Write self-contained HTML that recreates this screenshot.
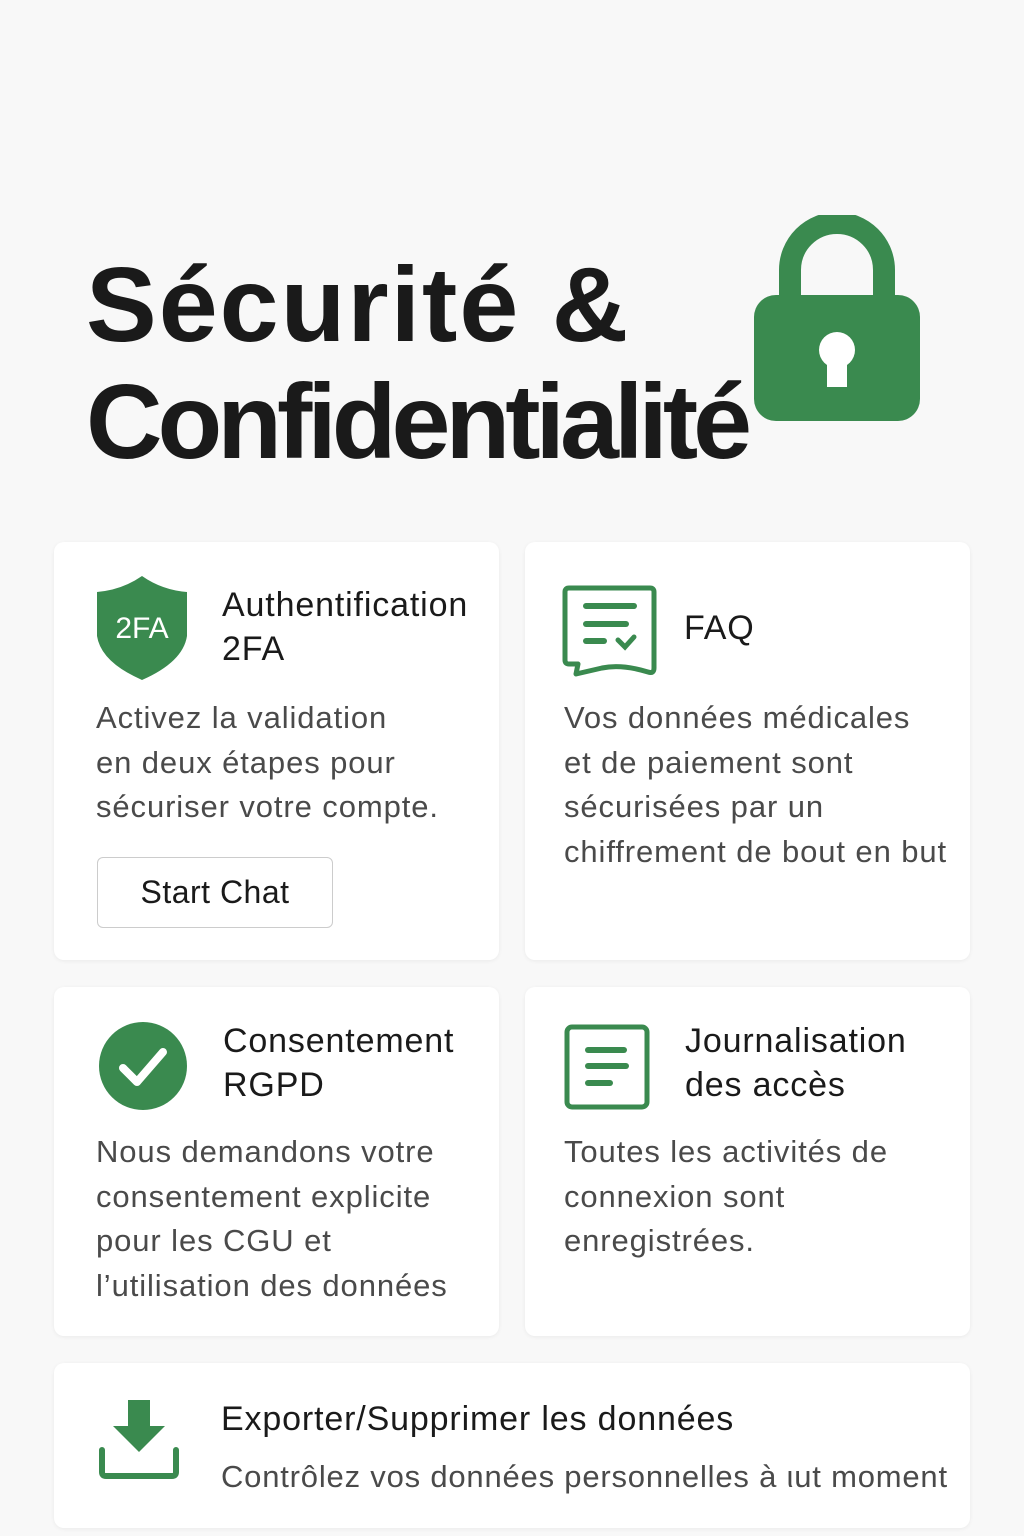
<!DOCTYPE html>
<html><head><meta charset="utf-8"><style>
body{margin:0;width:1024px;height:1536px;background:#f8f8f8;font-family:"Liberation Sans",sans-serif;position:relative;overflow:hidden}
.t{position:absolute;left:86px;font-weight:bold;font-size:106px;color:#1a1a1a;white-space:nowrap}
.c{position:absolute;background:#fff;border-radius:10px;box-shadow:0 1px 4px rgba(0,0,0,.06)}
.h{position:absolute;font-size:34px;line-height:44px;color:#1a1a1a;letter-spacing:0.85px;white-space:nowrap}
.p{position:absolute;font-size:31px;line-height:44.5px;color:#4a4a4a;white-space:nowrap;letter-spacing:0.9px}
svg{position:absolute}
</style></head><body>
<div class="t" style="top:245px;letter-spacing:2px">Sécurité &amp;</div>
<div class="t" style="top:362px;letter-spacing:-5px">Confidentialité</div>
<svg style="left:752px;top:215px" width="170" height="210" viewBox="0 0 170 210">
<path d="M38 85 V55 a47 47 0 0 1 94 0 V85" fill="none" stroke="#3a8a4f" stroke-width="22"/>
<rect x="2" y="80" width="166" height="126" rx="22" fill="#3a8a4f"/>
<circle cx="85" cy="135" r="18" fill="#fff"/><rect x="75" y="140" width="20" height="32" fill="#fff"/>
</svg>

<div class="c" style="left:54px;top:542px;width:445px;height:418px"></div>
<svg style="left:97px;top:576px" width="90" height="104" viewBox="0 0 90 104"><path d="M45 0 Q25 14 0 16 V60 Q4 86 45 104 Q86 86 90 60 V16 Q65 14 45 0Z" fill="#3a8a4f"/><text x="45" y="62" font-size="30" fill="#fff" text-anchor="middle" font-family="Liberation Sans">2FA</text></svg>
<div class="h" style="left:222px;top:583px">Authentification<br>2FA</div>
<div class="p" style="left:96px;top:696px">Activez la validation<br>en deux étapes pour<br>sécuriser votre compte.</div>
<div style="position:absolute;left:97px;top:857px;width:234px;height:69px;border:1px solid #ccc;border-radius:6px;background:#fff;font-size:32px;line-height:69px;text-align:center;color:#1a1a1a;letter-spacing:0.5px">Start Chat</div>

<div class="c" style="left:525px;top:542px;width:445px;height:418px"></div>
<svg style="left:562px;top:584px" width="95" height="95" viewBox="0 0 95 95"><path d="M7 4 H88 Q92 4 92 8 V84 Q92 90 86 88 Q60 80 40 84 L14 90 L16 80 H7 Q3 80 3 76 V8 Q3 4 7 4Z" fill="none" stroke="#3a8a4f" stroke-width="5" stroke-linejoin="round"/><g stroke="#3a8a4f" stroke-width="6" stroke-linecap="round"><line x1="24" y1="22" x2="72" y2="22"/><line x1="24" y1="40" x2="64" y2="40"/><line x1="24" y1="57" x2="42" y2="57"/></g><path d="M56 56 L63 63 L72 53" fill="none" stroke="#3a8a4f" stroke-width="5" stroke-linecap="round"/></svg>
<div class="h" style="left:684px;top:606px">FAQ</div>
<div class="p" style="left:564px;top:696px">Vos données médicales<br>et de paiement sont<br>sécurisées par un<br>chiffrement de bout en but</div>

<div class="c" style="left:54px;top:987px;width:445px;height:349px"></div>
<svg style="left:99px;top:1022px" width="88" height="88" viewBox="0 0 88 88"><circle cx="44" cy="44" r="44" fill="#3a8a4f"/><path d="M24 46 L38 60 L64 30" fill="none" stroke="#fff" stroke-width="8" stroke-linecap="round" stroke-linejoin="round"/></svg>
<div class="h" style="left:223px;top:1019px">Consentement<br>RGPD</div>
<div class="p" style="left:96px;top:1130px">Nous demandons votre<br>consentement explicite<br>pour les CGU et<br>l’utilisation des données</div>

<div class="c" style="left:525px;top:987px;width:445px;height:349px"></div>
<svg style="left:564px;top:1024px" width="86" height="86" viewBox="0 0 86 86"><rect x="3" y="3" width="80" height="80" rx="5" fill="none" stroke="#3a8a4f" stroke-width="5"/><g stroke="#3a8a4f" stroke-width="6" stroke-linecap="round"><line x1="24" y1="26" x2="60" y2="26"/><line x1="24" y1="42" x2="62" y2="42"/><line x1="24" y1="59" x2="46" y2="59"/></g></svg>
<div class="h" style="left:685px;top:1019px">Journalisation<br>des accès</div>
<div class="p" style="left:564px;top:1130px">Toutes les activités de<br>connexion sont<br>enregistrées.</div>

<div class="c" style="left:54px;top:1363px;width:916px;height:165px"></div>
<svg style="left:97px;top:1398px" width="84" height="82" viewBox="0 0 84 82"><path d="M31 2 H53 V28 H68 L42 54 L16 28 H31Z" fill="#3a8a4f"/><path d="M5 52 V74 Q5 78 9 78 H75 Q79 78 79 74 V52" fill="none" stroke="#3a8a4f" stroke-width="6" stroke-linecap="round"/></svg>
<div class="h" style="left:221px;top:1397px">Exporter/Supprimer les données</div>
<div class="p" style="left:221px;top:1455px;letter-spacing:0.8px">Contrôlez vos données personnelles à ιut moment</div>
</body></html>
